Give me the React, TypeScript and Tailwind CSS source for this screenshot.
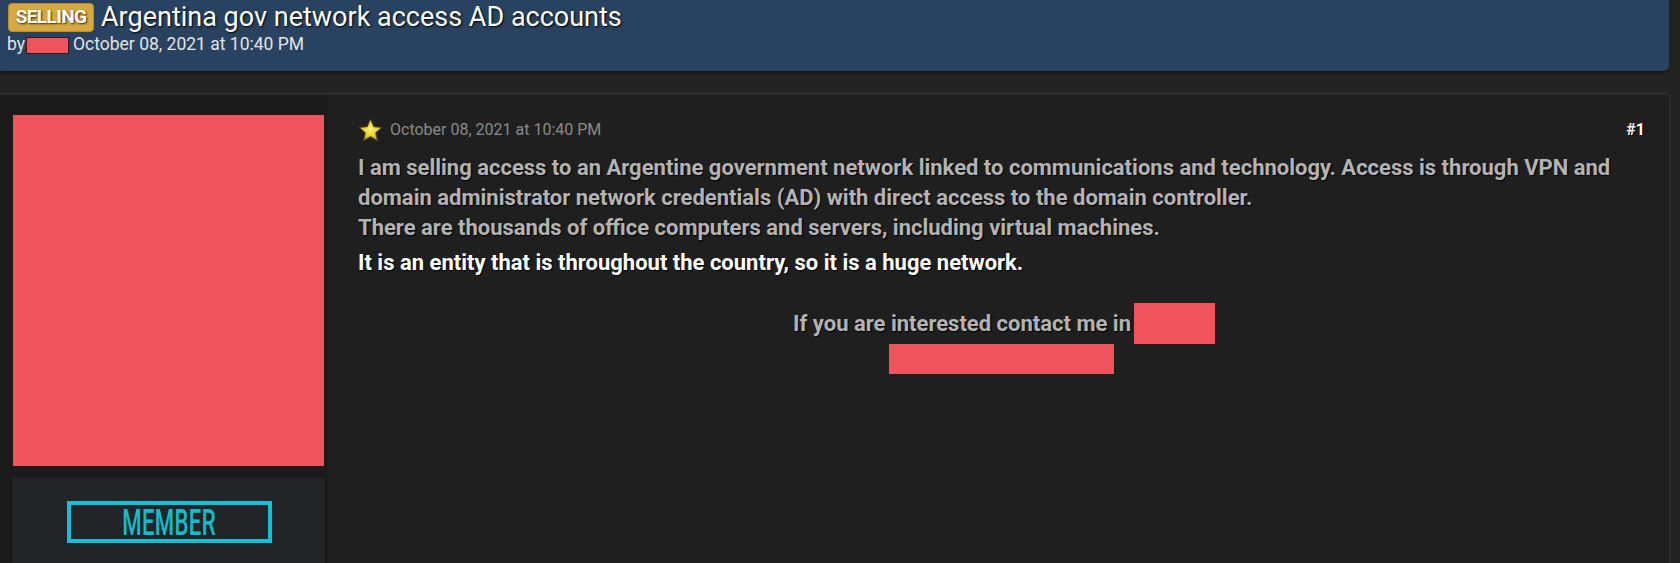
import React from "react";

const Star: React.FC = () => (
  <svg width="25" height="25" viewBox="0 0 24 24" className="shrink-0">
    <defs>
      <radialGradient id="starFill" cx="50%" cy="45%" r="60%">
        <stop offset="0%" stopColor="#fbf27a" />
        <stop offset="55%" stopColor="#e8d22c" />
        <stop offset="100%" stopColor="#a8890a" />
      </radialGradient>
    </defs>
    <path
      d="M12 1.2l3.1 7.3 7.7.6-5.9 5.1 1.8 7.7L12 17.8l-6.7 4.1 1.8-7.7-5.9-5.1 7.7-.6z"
      fill="url(#starFill)"
      stroke="#5a4a06"
      strokeWidth="0.8"
      strokeLinejoin="round"
    />
  </svg>
);

export default function App() {
  return (
    <div className="h-[563px] overflow-hidden bg-[#222222] font-['Roboto','Liberation_Sans',sans-serif]">
      <header className="mr-[11px] h-[71px] rounded-br-[5px] bg-[#28425f] pl-[8px] pt-[3px] shadow-[0_2px_3px_rgba(0,0,0,0.35)]">
        <div className="flex h-[29px] items-center">
          <span className="flex h-[29px] w-[86px] items-center justify-center rounded-[4px] border border-[#b98b2c] bg-[#d6a842] text-[19px] font-bold tracking-[-0.6px] text-white [text-shadow:1px_1px_2px_#3a2a05]">
            SELLING
          </span>
          <h1 className="ml-[7px] text-[27px] leading-none text-white [text-shadow:1px_1px_2px_#000]">
            Argentina gov network access AD accounts
          </h1>
        </div>
        <div className="mt-[4px] flex h-[18px] items-center text-[17.5px] leading-none text-[#e4e4e4]">
          <span className="-ml-px">by</span>
          <span className="ml-px h-[17px] w-[43px] border border-[#3a1414] bg-[#ef535b]" />
          <span className="ml-[4px]">October 08, 2021 at 10:40 PM</span>
        </div>
      </header>

      <div className="mr-[9px] mt-[21px] flex h-[480px] rounded-tr-[6px] border-r-2 border-t-[3px] border-[#2b2b2b] bg-[#1f1f1f]">
        <aside className="flex w-[327px] shrink-0 flex-col border-r-2 border-[#191919] bg-[#1b1b1b] pl-[13px] pt-[20px]">
          <div className="h-[351px] w-[311px] bg-[#ef535b]" />
          <div className="mt-[12px] flex w-[312px] flex-1 justify-center bg-[#232428] pt-[23px]">
            <div className="flex h-[42px] w-[205px] items-center justify-center border-4 border-[#12c2d4]">
              <span className="inline-block scale-x-[0.6] text-[37px] font-medium leading-none tracking-[0.5px] text-[#13bccd]">
                MEMBER
              </span>
            </div>
          </div>
        </aside>

        <main className="flex-1 pl-[31px] pr-[19px] pt-[23px]">
          <div className="flex h-[24px] items-center justify-between pr-[5px]">
            <div className="flex items-center">
              <Star />
              <span className="ml-[7px] text-[16px] text-[#8a8a8a]">
                October 08, 2021 at 10:40 PM
              </span>
            </div>
            <span className="text-[16px] font-bold text-white [text-shadow:1px_1px_1px_#000]">
              #1
            </span>
          </div>

          <div className="mt-[11px] text-[22px] font-bold leading-[30px] text-[#b3b3b3] [text-shadow:1px_1px_1px_#000]">
            <div className="whitespace-nowrap">
              I am selling access to an Argentine government network linked to communications and technology. Access is through VPN and
            </div>
            <div className="whitespace-nowrap">
              domain administrator network credentials (AD) with direct access to the domain controller.
            </div>
            <div className="whitespace-nowrap">
              There are thousands of office computers and servers, including virtual machines.
            </div>
            <div className="mt-[5px] whitespace-nowrap text-white">
              It is an entity that is throughout the country, so it is a huge network.
            </div>

            <div className="mt-[25px] flex flex-col items-center">
              <div className="flex items-center">
                <span>If you are interested contact me in</span>
                <span className="ml-[3px] h-[41px] w-[81px] bg-[#ef535b]" />
              </div>
              <span className="-ml-[6px] h-[30px] w-[225px] bg-[#ef535b]" />
            </div>
          </div>
        </main>
      </div>
    </div>
  );
}
